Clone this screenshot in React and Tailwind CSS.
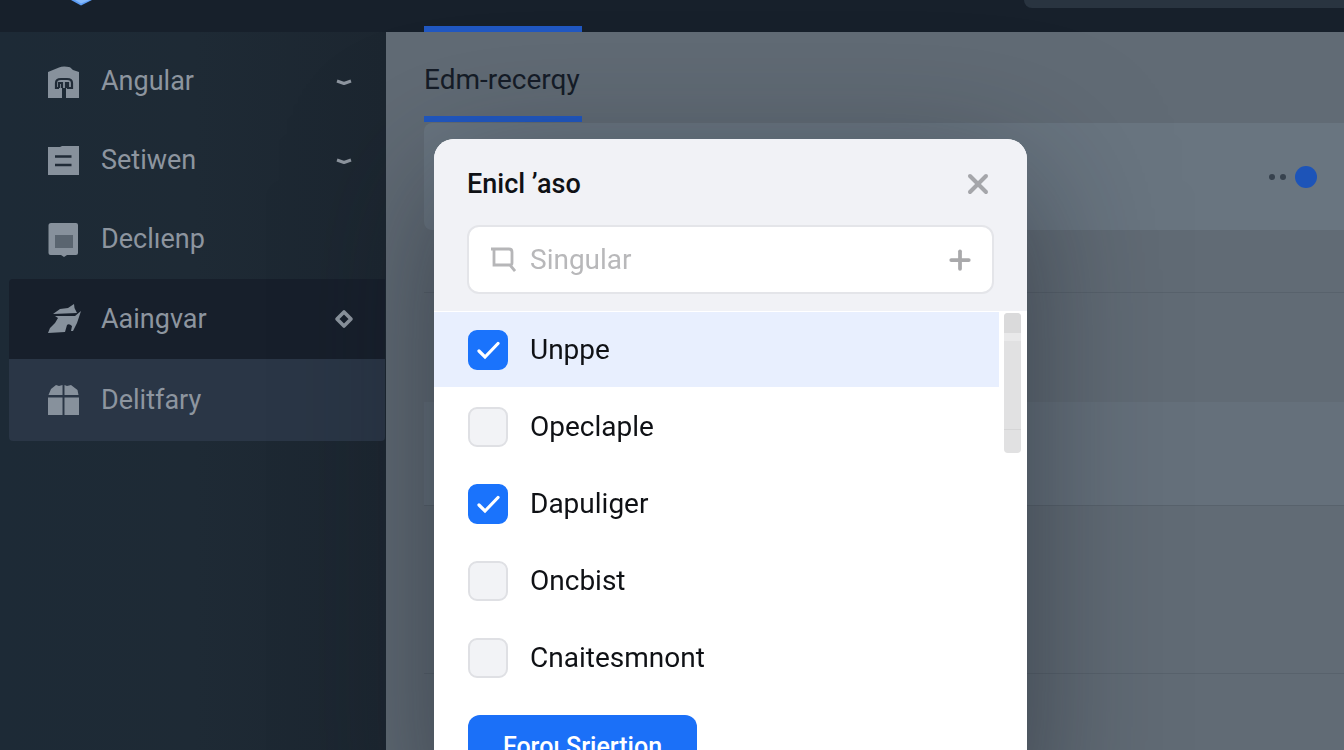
import React, { useState } from "react";
import { FiPlus, FiX } from "react-icons/fi";

const initialOptions = [
  { id: 1, name: "Unppe", checked: true },
  { id: 2, name: "Opeclaple", checked: false },
  { id: 3, name: "Dapuliger", checked: true },
  { id: 4, name: "Oncbist", checked: false },
  { id: 5, name: "Cnaitesmnont", checked: false },
];

const HouseIcon = () => (
  <svg viewBox="0 0 32 32" className="size-8 shrink-0" aria-hidden="true">
    <path d="M1 32V6L12 1.500Q16 -.5 23 1.200L26 4 32 6V32H19V22h-4v10Z" fill="currentColor" />
    <path
      d="M12 22H9v-5q0-4 5-4h6q5 0 5 4v5h-4v-5h-2v5M12 22v-5h3v5"
      fill="none"
      stroke="#202b37"
      strokeWidth="2.200"
    />
  </svg>
);

const ListIcon = () => (
  <svg viewBox="0 0 32 32" className="size-8 shrink-0" aria-hidden="true">
    <path d="M1 2 13 2 15 1H32V30H1Z" fill="currentColor" />
    <path d="M8 11.500H24.500M8 20H24.500" stroke="#202b37" strokeWidth="2.600" />
  </svg>
);

const ScreenIcon = () => (
  <svg viewBox="0 0 32 34" className="h-[34px] w-8 shrink-0" aria-hidden="true">
    <path d="M4 0H29Q31 0 31 2V30Q31 32 29 32H20L17 34 14 32H3.500Q1.500 32 1.500 30V2.500Q1.500 0 4 0Z" fill="currentColor" />
    <path d="M8 12H26V25H8Z" fill="#5a6570" />
  </svg>
);

const FlagIcon = () => (
  <svg viewBox="0 0 34 30" className="h-[30px] w-[34px] shrink-0" aria-hidden="true">
    <path d="M6 10 13 5 21 4 27 0 27.500 4 30 9Z" fill="currentColor" />
    <path d="M8 12H28L34 7 30 19 26 27H24L25 22Q22 19 20 21L18 28 1 29 3 24 8 19 11 14Z" fill="currentColor" />
  </svg>
);

const GiftIcon = () => (
  <svg viewBox="0 0 32 32" className="size-8 shrink-0" aria-hidden="true">
    <path d="M1.500 11 4 5 9 1 12 2 15.500 1V11ZM17.500 1 20 2 24 1 30.500 6 31.500 11H17.500ZM1 13.500H15.500V31H1ZM17.500 13.500H32V31H17.500Z" fill="currentColor" />
  </svg>
);

const DashMark = () => (
  <svg viewBox="0 0 20 20" className="size-5" aria-hidden="true">
    <path d="M3 9 10 11.500 17 9" fill="none" stroke="currentColor" strokeWidth="3" strokeLinejoin="round" />
  </svg>
);

const DiamondMark = () => (
  <svg viewBox="0 0 20 20" className="size-5" aria-hidden="true">
    <path d="M10 3 17 10 10 17 3 10Z" fill="none" stroke="currentColor" strokeWidth="3.600" strokeLinejoin="round" />
  </svg>
);

const menu = [
  { name: "Angular", icon: HouseIcon, mark: DashMark, style: "h-[79px]" },
  { name: "Setiwen", icon: ListIcon, mark: DashMark, style: "h-[79px]" },
  { name: "Declıenp", icon: ScreenIcon, style: "h-[79px]" },
  { name: "Aaingvar", icon: FlagIcon, mark: DiamondMark, style: "h-20 bg-[#171f2b] rounded-tl" },
  { name: "Delitfary", icon: GiftIcon, style: "h-[82px] bg-[#2a3646] rounded-b" },
];

const App = () => {
  const [options, setOptions] = useState(initialOptions);
  const [search, setSearch] = useState("");
  const [open, setOpen] = useState(true);

  const toggle = (id) => {
    setOptions((prev) =>
      prev.map((item) =>
        item.id === id ? { ...item, checked: !item.checked } : item
      )
    );
  };

  return (
    <div className="flex min-h-screen flex-col overflow-hidden bg-[#1d2834] font-[Roboto,sans-serif]">

      {/* HEADER */}
      <header className="flex h-8 items-start justify-between bg-[#17202b] pl-[66px]">
        <svg viewBox="0 0 30 6" className="h-1.5 w-[30px]" aria-hidden="true">
          <path d="M5 0H26L15 5.500Z" fill="#5b9cf5" />
          <path d="M9 0H24L15 3.500Z" fill="#86b9fb" />
        </svg>
        <div className="h-2 w-[320px] rounded-bl-2xl bg-[#293440]" />
      </header>

      <div className="flex flex-1">

        {/* SIDEBAR */}
        <nav className="w-[386px] shrink-0 bg-linear-to-r from-[#1d2a36] via-[#1e2a35] to-[#1c2630] pt-2.5 pr-px pl-[9px]">
          {menu.map((item) => (
            <a
              key={item.name}
              href="#"
              className={`flex items-center pr-[31px] pl-[38px] text-[27px] text-[#8d959f] ${item.style}`}
            >
              <span className="flex w-[54px] text-[#87919c]">
                <item.icon />
              </span>
              <span className="flex-1">{item.name}</span>
              {item.mark && <item.mark />}
            </a>
          ))}
        </nav>

        {/* CONTENT */}
        <main className="flex min-w-0 flex-1 flex-col bg-[#616b75] pl-[38px]">
          <div className="-mt-1.5 flex">
            <a
              href="#"
              className="flex h-24 w-[158px] items-center border-y-6 border-[#2158c2] pt-3 text-[28px] text-[#151c27]"
            >
              Edm-recerqy
            </a>
          </div>
          <div className="mt-px flex h-[107px] items-center justify-end gap-[5px] rounded-l-lg bg-[#6c7984]/70 pr-[27px]">
            <span className="size-1.5 rounded-full bg-[#37424e]" />
            <span className="size-1.5 rounded-full bg-[#37424e]" />
            <span className="ml-1 size-[22px] rounded-full bg-[#1d54b8]" />
          </div>
          <div className="h-[63px] border-b border-[#58626c]" />
          <div className="h-[109px]" />
          <div className="h-[104px] border-b border-[#58626c] bg-[#6c7984]/40" />
          <div className="h-[168px] border-b border-[#58626c]" />
        </main>
      </div>

      {/* MODAL */}
      {open && (
        <div className="fixed inset-0 flex items-start overflow-hidden pt-[139px] pl-[434px]">
          <div
            role="dialog"
            aria-labelledby="dialog-title"
            className="w-[593px] overflow-hidden rounded-[20px] bg-white shadow-[0_40px_140px_0_rgba(20,26,36,0.5)]"
          >
            <div className="border-b border-white bg-[#f1f2f6] px-[33px] pb-[17px]">
              <div className="flex h-[86px] items-center justify-between pt-1">
                <h2 id="dialog-title" className="text-[27px] font-medium text-[#0f1115]">
                  Enicl ’aso
                </h2>
                <button aria-label="Close" onClick={() => setOpen(false)} className="text-[#a5a6aa]">
                  <FiX size={32} strokeWidth={3} />
                </button>
              </div>

              <div className="flex h-[69px] items-center rounded-xl border-2 border-[#e4e5e9] bg-white pr-[17px] pl-[21px]">
                <svg viewBox="0 0 26 26" className="size-[26px] shrink-0" aria-hidden="true">
                  <path
                    d="M1 2H19Q22 2 22 5V16Q22 18 20 18H4V2M17 18H20L25 24"
                    fill="none"
                    stroke="#b6b6b8"
                    strokeWidth="2.800"
                  />
                </svg>
                <input
                  aria-label="Search"
                  placeholder="Singular"
                  value={search}
                  onChange={(e) => setSearch(e.target.value)}
                  className="ml-3.5 min-w-0 flex-1 text-[28px] outline-none placeholder:text-[#b8b8ba]"
                />
                <button aria-label="Add" className="text-[#a9a9ab]">
                  <FiPlus size={30} strokeWidth={3} />
                </button>
              </div>
            </div>

            {/* OPTIONS */}
            <div className="flex items-start">
              <ul className="flex flex-1 flex-col gap-0.5">
                {options.map((item, index) => (
                  <li key={item.id} className={index === 0 ? "bg-[#e8effe]" : ""}>
                    <label className="flex h-[75px] items-center gap-[22px] pl-[34px] text-[28px] text-[#0f1115]">
                      <span className="grid size-10 place-items-center">
                        <input
                          type="checkbox"
                          checked={item.checked}
                          onChange={() => toggle(item.id)}
                          className="col-start-1 row-start-1 size-10 appearance-none rounded-[9px] border-2 border-[#dfe0e4] bg-[#f2f3f6] checked:border-[#1a73fc] checked:bg-[#1a73fc]"
                        />
                        {item.checked && (
                          <svg viewBox="0 0 24 24" className="pointer-events-none col-start-1 row-start-1 size-6" aria-hidden="true">
                            <path
                              d="M3 13 9 19 22 5.500"
                              fill="none"
                              stroke="white"
                              strokeWidth="3.200"
                              strokeLinecap="round"
                            />
                          </svg>
                        )}
                      </span>
                      {item.name}
                    </label>
                  </li>
                ))}
              </ul>
              <div className="mt-px mr-1.5 ml-[5px] flex h-[140px] w-[17px] flex-col overflow-hidden rounded bg-[#e1e1e2]">
                <div className="h-5 bg-[#dadadb]" />
                <div className="h-2 bg-[#e9e9ea]" />
                <div className="mt-[88px] h-px bg-[#d5d5d6]" />
              </div>
            </div>

            <div className="px-[34px] pt-5 pb-8">
              <button className="h-16 w-[229px] rounded-xl bg-[#1b70f8] text-[25px] font-medium text-white">
                Foroı Sriertion
              </button>
            </div>
          </div>
        </div>
      )}
    </div>
  );
};

export default App;
